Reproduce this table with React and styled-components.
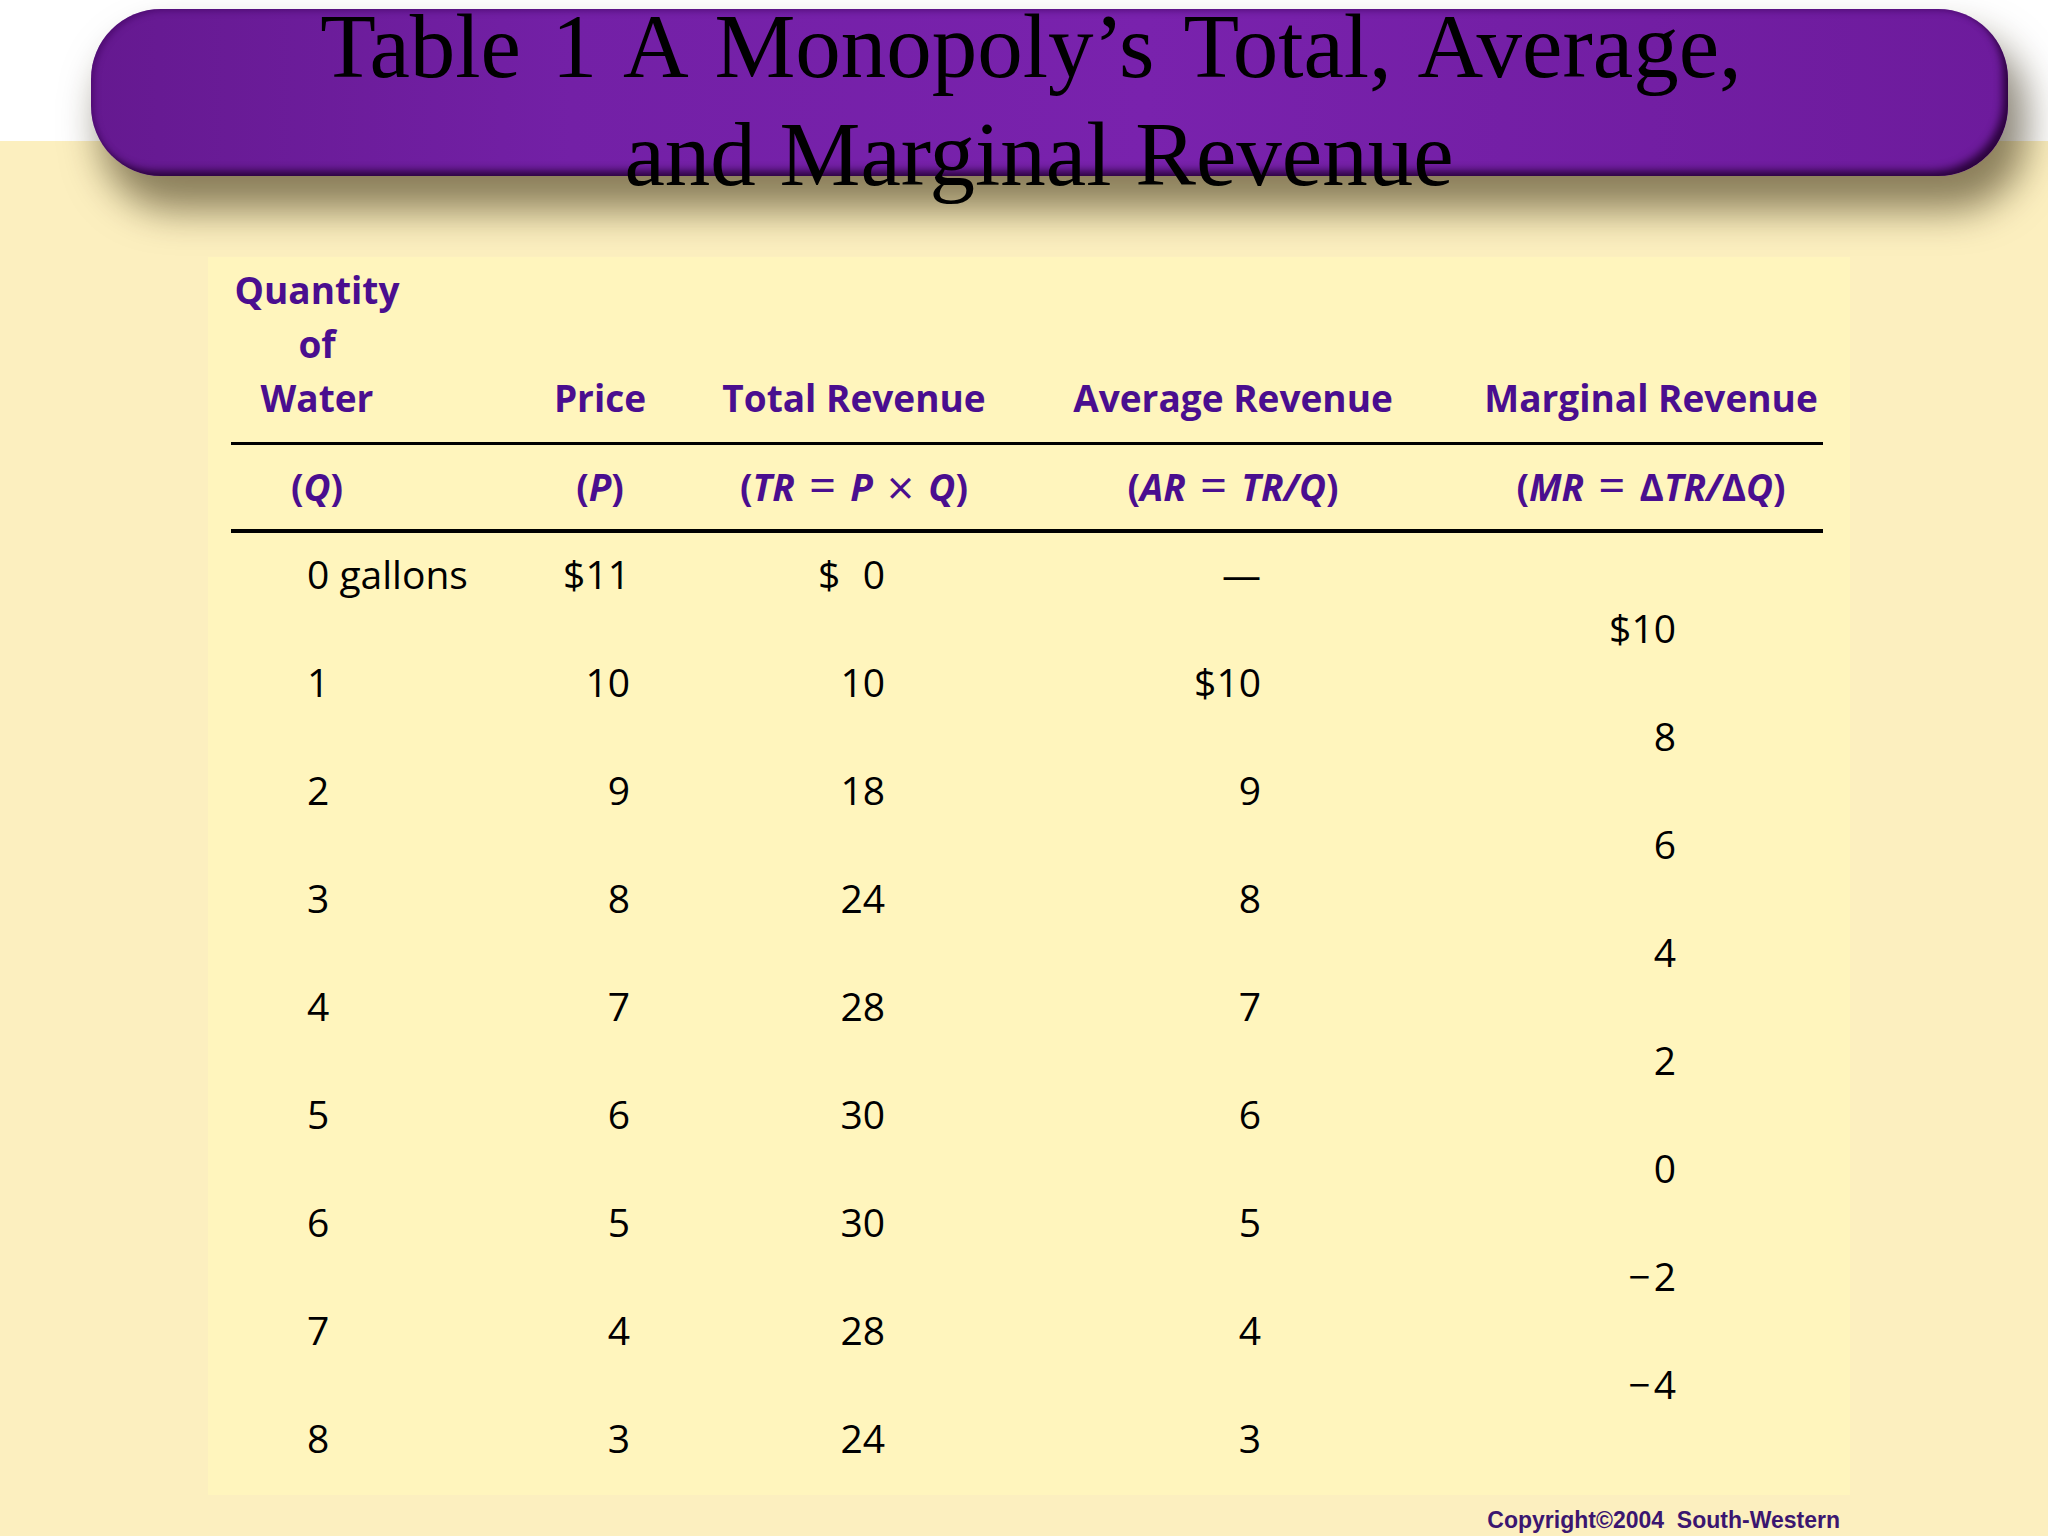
import React from 'react';
import styled, { createGlobalStyle } from 'styled-components';

const GlobalStyle = createGlobalStyle`
  html, body { margin: 0; padding: 0; }
  body { background: #ffffff; }
`;

const Page = styled.div`
  width: 2048px;
  height: 1536px;
  overflow: hidden;
  background: linear-gradient(to bottom, #ffffff 0, #ffffff 141px, #fcefbf 141px, #fcefbf 100%);
  display: flex;
  flex-direction: column;
  font-family: "Open Sans", "Noto Sans", sans-serif;
`;

const TitleBar = styled.header`
  position: relative;
  z-index: 1;
  margin: 9px 0 0 91px;
  width: 1917px;
  height: 167px;
  box-sizing: border-box;
  padding-right: 37px;
  border-radius: 70px;
  background: linear-gradient(to right, #651990 0%, #7320a6 25%, #7922ad 55%, #6d1b9c 100%);
  box-shadow:
    inset -7px -7px 9px -2px rgba(35, 0, 50, 0.9),
    inset 3px 2px 6px rgba(60, 0, 90, 0.55),
    14px 30px 38px 4px rgba(45, 35, 10, 0.55);
  display: flex;
  justify-content: center;
`;

const Title = styled.h1`
  margin: -7px 0 0;
  font-family: "Liberation Serif", "Times New Roman", serif;
  font-weight: 400;
  font-size: 91px;
  line-height: 90px;
  color: #000;
  text-align: center;
  white-space: nowrap;
`;

const TitleLine = styled.span`
  display: block;
  margin-top: ${(p) => (p.$second ? '18px' : '0')};
  padding-left: ${(p) => (p.$second ? '16px' : '0')};
  word-spacing: ${(p) => (p.$second ? '1px' : '8px')};
`;

const Panel = styled.section`
  margin: 81px 0 0 208px;
  width: 1642px;
  height: 1238px;
  box-sizing: border-box;
  padding: 6px 27px 0 23px;
  background: #fff5bd;
`;

const Grid = styled.div`
  display: grid;
  grid-template-columns: 227px 242px 343px 399px 381px;
`;

const DataGrid = styled(Grid)`
  grid-auto-rows: 54px;
  padding-top: 14px;
`;

const HeadCell = styled.div`
  align-self: end;
  padding: ${(p) => p.$pad};
  padding-bottom: 17px;
  border-bottom: 3px solid #000;
  text-align: center;
  white-space: nowrap;
  color: #4a0e8f;
  font-weight: 700;
  font-size: 37px;
  line-height: 54px;
`;

const FormulaCell = styled.div`
  height: 88px;
  box-sizing: border-box;
  padding: ${(p) => p.$pad};
  border-bottom: 4px solid #000;
  display: flex;
  align-items: center;
  justify-content: center;
  white-space: nowrap;
  color: #4a0e8f;
  font-weight: 700;
  font-size: 37px;
  line-height: 54px;
`;

const FormulaText = styled.span`
  display: inline-block;
`;

const Var = styled.i`
  font-style: italic;
  font-weight: 700;
`;

const Op = styled.span`
  font-weight: 400;
  font-size: 1.28em;
  line-height: 0;
  padding: 0 0.3em;
  vertical-align: ${(p) => (p.$low ? '-0.09em' : '-0.03em')};
`;

const DataCell = styled.div`
  grid-column: ${(p) => p.$col};
  grid-row: ${(p) => p.$row};
  padding: ${(p) => p.$pad};
  text-align: ${(p) => p.$align};
  white-space: nowrap;
  color: #000;
  font-size: 39px;
  line-height: 54px;
`;

const Minus = styled.span`
  margin-right: 0.08em;
`;

const Copyright = styled.div`
  align-self: flex-end;
  margin: 12px 208px 0 0;
  font-family: "Liberation Sans", Arial, sans-serif;
  font-weight: 700;
  font-size: 23px;
  line-height: 26px;
  color: #3b1670;
  white-space: pre;
`;

const COLS = [
  {
    headPad: '0 55px 0 0',
    head: (
      <>
        Quantity
        <br />
        of
        <br />
        Water
      </>
    ),
    formula: (
      <>
        (<Var>Q</Var>)
      </>
    ),
    align: 'left',
    dataPad: '0 0 0 76px',
  },
  {
    headPad: '0 0 0 42px',
    head: 'Price',
    formula: (
      <>
        (<Var>P</Var>)
      </>
    ),
    align: 'right',
    dataPad: '0 70px 0 0',
  },
  {
    headPad: '0 35px 0 0',
    head: 'Total Revenue',
    formula: (
      <>
        (<Var>TR</Var>
        <Op>=</Op>
        <Var>P</Var>
        <Op $low>×</Op>
        <Var>Q</Var>)
      </>
    ),
    align: 'right',
    dataPad: '0 158px 0 0',
  },
  {
    headPad: '0 19px 0 0',
    head: 'Average Revenue',
    formula: (
      <>
        (<Var>AR</Var>
        <Op>=</Op>
        <Var>TR/Q</Var>)
      </>
    ),
    align: 'right',
    dataPad: '0 181px 0 0',
  },
  {
    headPad: '0 0 0 37px',
    head: 'Marginal Revenue',
    formula: (
      <>
        (<Var>MR</Var>
        <Op>=</Op>
        Δ<Var>TR/</Var>Δ<Var>Q</Var>)
      </>
    ),
    align: 'right',
    dataPad: '0 147px 0 0',
  },
];

const ROWS = [
  ['0 gallons', '$11', '$\u20070', '—'],
  ['1', '10', '10', '$10'],
  ['2', '9', '18', '9'],
  ['3', '8', '24', '8'],
  ['4', '7', '28', '7'],
  ['5', '6', '30', '6'],
  ['6', '5', '30', '5'],
  ['7', '4', '28', '4'],
  ['8', '3', '24', '3'],
];

const MARGINAL = ['$10', '8', '6', '4', '2', '0', -2, -4];

function renderValue(v) {
  if (typeof v === 'number' && v < 0) {
    return (
      <>
        <Minus>{'\u2212'}</Minus>
        {Math.abs(v)}
      </>
    );
  }
  return v;
}

export default function App() {
  return (
    <>
      <GlobalStyle />
      <Page>
        <TitleBar>
          <Title>
            <TitleLine>Table 1 A Monopoly’s Total, Average,</TitleLine>
            <TitleLine $second>and Marginal Revenue</TitleLine>
          </Title>
        </TitleBar>
        <Panel>
          <Grid>
            {COLS.map((c, i) => (
              <HeadCell key={i} $pad={c.headPad}>
                {c.head}
              </HeadCell>
            ))}
            {COLS.map((c, i) => (
              <FormulaCell key={i} $pad={c.headPad}>
                <FormulaText>{c.formula}</FormulaText>
              </FormulaCell>
            ))}
          </Grid>
          <DataGrid>
            {ROWS.map((row, r) =>
              row.map((v, ci) => (
                <DataCell
                  key={`${r}-${ci}`}
                  $col={ci + 1}
                  $row={r * 2 + 1}
                  $align={COLS[ci].align}
                  $pad={COLS[ci].dataPad}
                >
                  {v}
                </DataCell>
              ))
            )}
            {MARGINAL.map((v, j) => (
              <DataCell
                key={`mr-${j}`}
                $col={5}
                $row={j * 2 + 2}
                $align={COLS[4].align}
                $pad={COLS[4].dataPad}
              >
                {renderValue(v)}
              </DataCell>
            ))}
          </DataGrid>
        </Panel>
        <Copyright>Copyright©2004  South-Western</Copyright>
      </Page>
    </>
  );
}
